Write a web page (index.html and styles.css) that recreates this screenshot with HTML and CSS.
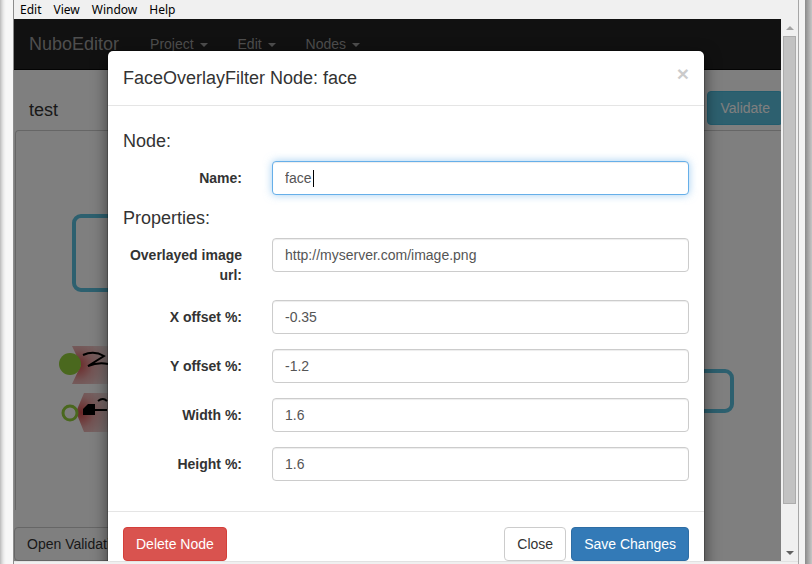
FILE: index.html
```html
<!DOCTYPE html>
<html>
<head>
<meta charset="utf-8">
<title>NuboEditor</title>
<link rel="stylesheet" href="styles.css">
</head>
<body>
<div class="window">
  <div class="frame-left"></div>
  <div class="main">
    <div class="menubar"><span>Edit</span><span>View</span><span>Window</span><span>Help</span></div>
    <div class="viewport">
      <div class="page">
        <nav class="navbar">
          <span class="brand">NuboEditor</span>
          <ul class="nav">
            <li>Project <span class="caret"></span></li>
            <li>Edit <span class="caret"></span></li>
            <li>Nodes <span class="caret"></span></li>
          </ul>
        </nav>
        <div class="header">
          <h3 class="page-title">test</h3>
          <button class="btn btn-info validate">Validate</button>
        </div>
        <div class="canvas">
          <svg class="diagram" width="766" height="378" viewBox="0 0 766 378">
            <defs>
              <radialGradient id="nodefill" cx="0.15" cy="0.5" r="0.9">
                <stop offset="0" stop-color="#d84e4e"/>
                <stop offset="0.45" stop-color="#e7a9a9"/>
                <stop offset="1" stop-color="#f5e6e6"/>
              </radialGradient>
            </defs>
            <rect x="58" y="85" width="110" height="74" rx="7" fill="none" stroke="#5bc0de" stroke-width="4"/>
            <rect x="625" y="240" width="91" height="40" rx="7" fill="none" stroke="#5bc0de" stroke-width="4"/>
            <polygon points="56,215 94,215 94,253 56,253 65,234" fill="url(#nodefill)"/>
            <path d="M67,224 Q78,219 88,225 L72,235 Q82,231 92,233" fill="none" stroke="#000" stroke-width="2"/>
            <circle cx="54" cy="233" r="11" fill="#94d03c"/>
            <polygon points="68,262 94,262 94,301 68,301 60,281" fill="url(#nodefill)"/>
            <polygon points="67,278 72,273 79,273 79,284 67,284" fill="#000"/>
            <path d="M79,279 L91,279 M82,270 Q87,266 91,270" fill="none" stroke="#000" stroke-width="2"/>
            <circle cx="54" cy="282" r="7" fill="none" stroke="#94d03c" stroke-width="3"/>
          </svg>
        </div>
        <div class="page-footer">
          <button class="btn btn-default">Open Validation</button>
        </div>
        <div class="backdrop"></div>
        <div class="modal">
          <div class="modal-header">
            <h4 class="modal-title">FaceOverlayFilter Node: face</h4>
            <button class="close">&times;</button>
          </div>
          <div class="modal-body">
            <h4 class="section">Node:</h4>
            <div class="form-group tight">
              <label class="control-label">Name:</label>
              <div class="control-col caret-wrap">
                <input class="form-control focused" type="text" value="face">
                <span class="text-caret"></span>
              </div>
            </div>
            <h4 class="section">Properties:</h4>
            <div class="form-group">
              <label class="control-label">Overlayed image url:</label>
              <div class="control-col"><input class="form-control" type="text" value="http://myserver.com/image.png"></div>
            </div>
            <div class="form-group">
              <label class="control-label">X offset %:</label>
              <div class="control-col"><input class="form-control" type="text" value="-0.35"></div>
            </div>
            <div class="form-group">
              <label class="control-label">Y offset %:</label>
              <div class="control-col"><input class="form-control" type="text" value="-1.2"></div>
            </div>
            <div class="form-group">
              <label class="control-label">Width %:</label>
              <div class="control-col"><input class="form-control" type="text" value="1.6"></div>
            </div>
            <div class="form-group">
              <label class="control-label">Height %:</label>
              <div class="control-col"><input class="form-control" type="text" value="1.6"></div>
            </div>
          </div>
          <div class="modal-footer">
            <button class="btn btn-danger">Delete Node</button>
            <div class="footer-right">
              <button class="btn btn-default">Close</button>
              <button class="btn btn-primary">Save Changes</button>
            </div>
          </div>
        </div>
      </div>
      <div class="scrollbar">
        <div class="sb-btn"><span class="arrow-up"></span></div>
        <div class="thumb"></div>
        <div class="track-rest"></div>
        <div class="sb-btn"><span class="arrow-down"></span></div>
      </div>
    </div>
    <div class="frame-bottom"></div>
  </div>
  <div class="frame-right"></div>
</div>
</body>
</html>
```

FILE: styles.css
```css
* { box-sizing: border-box; }
html, body { margin: 0; padding: 0; }
body {
  font-family: "Liberation Sans", Arial, sans-serif;
  font-size: 14px;
  line-height: 1.42857;
  color: #333;
  background: #f0f0f0;
  width: 812px;
  height: 564px;
  overflow: hidden;
}
.window { display: flex; height: 564px; }
.frame-left {
  width: 14px;
  background: linear-gradient(to right, #b9b9b9 0, #d9d9d9 2px, #eeeeee 4px, #f7f7f7 6px, #f7f7f7 13px, #8c8c8c 13px);
}
.main { width: 784px; display: flex; flex-direction: column; }
.menubar {
  height: 19px;
  background: #f0f0f0;
  display: flex;
  font-family: "Noto Sans", "Liberation Sans", sans-serif;
  font-size: 12px;
  line-height: 19px;
  color: #000;
}
.menubar span { padding: 0 6px; }
.viewport { display: flex; height: 542px; }
.page {
  position: relative;
  width: 767px;
  height: 542px;
  overflow: hidden;
  background: #fff;
}
.frame-bottom { height: 3px; background: #f0f0f0; border-top: 1px solid #e2e2e2; }
.frame-right {
  width: 14px;
  background: linear-gradient(to right, #a6a6a6 0, #a6a6a6 1px, #f2f2f2 1px, #f2f2f2 7px, #8a8a8a 7px, #c6c6c6 14px);
}

/* navbar */
.navbar {
  height: 51px;
  background: #222;
  border-bottom: 1px solid #080808;
  display: flex;
  align-items: center;
}
.brand { padding: 0 15px; font-size: 18px; line-height: 20px; color: #9d9d9d; }
.nav { display: flex; list-style: none; margin: 0; padding: 0 0 0 1px; }
.nav li { padding: 0 15px; color: #9d9d9d; line-height: 20px; }
.caret {
  display: inline-block;
  width: 0; height: 0;
  margin-left: 2px;
  vertical-align: middle;
  border-top: 4px solid;
  border-left: 4px solid transparent;
  border-right: 4px solid transparent;
}

/* page header */
.header {
  display: flex;
  align-items: center;
  justify-content: space-between;
  padding: 21px 0 0 15px;
}
.page-title { margin: 3px 0 0; font-size: 18px; font-weight: normal; line-height: 20px; }
.btn {
  display: inline-block;
  padding: 6px 12px;
  font-family: inherit;
  font-size: 14px;
  line-height: 20px;
  border: 1px solid transparent;
  border-radius: 4px;
  white-space: nowrap;
  cursor: pointer;
}
.btn-info { color: #fff; background: #5bc0de; border-color: #46b8da; }
.validate { margin-right: -2px; }
.btn-default { color: #333; background: #fff; border-color: #ccc; }
.btn-primary { color: #fff; background: #337ab7; border-color: #2e6da4; }
.btn-danger { color: #fff; background: #d9534f; border-color: #d43f3a; }

/* canvas */
.canvas {
  position: relative;
  margin: 5px -10px 0 1px;
  height: 380px;
  border: 1px solid #ccc;
  border-bottom: 0;
  border-radius: 4px 4px 0 0;
  overflow: hidden;
}
.diagram { display: block; }
.page-footer { padding-top: 17px; }

/* modal */
.backdrop { position: absolute; inset: 0; background: rgba(0, 0, 0, 0.5); }
.modal {
  position: absolute;
  left: 93px;
  top: 31px;
  width: 598px;
  background: #fff;
  border: 1px solid rgba(0, 0, 0, 0.2);
  border-radius: 6px;
  box-shadow: 0 5px 15px rgba(0, 0, 0, 0.5);
  background-clip: padding-box;
}
.modal-header {
  display: flex;
  justify-content: space-between;
  align-items: flex-start;
  padding: 15px;
  border-bottom: 1px solid #e5e5e5;
}
.modal-title { margin: 0; font-size: 18px; font-weight: normal; line-height: 24px; }
.close {
  margin-top: -3px;
  padding: 0;
  border: 0;
  background: none;
  font-family: inherit;
  font-size: 21px;
  font-weight: bold;
  line-height: 1;
  color: #000;
  opacity: 0.2;
}
.modal-body { padding: 15px; }
.section { margin: 10px 0; font-size: 18px; font-weight: normal; line-height: 20px; }
.form-group { display: flex; margin: 0 -15px 15px; }
.form-group.tight { margin-bottom: 13px; }
.control-label {
  width: 149px;
  flex: none;
  padding: 7px 15px 0;
  text-align: right;
  font-weight: bold;
  line-height: 20px;
}
.control-col { flex: 1; padding: 0 15px; }
.caret-wrap { position: relative; }
.form-control {
  display: block;
  width: 100%;
  height: 34px;
  padding: 6px 12px;
  font-family: inherit;
  font-size: 14px;
  line-height: 20px;
  color: #555;
  background: #fff;
  border: 1px solid #ccc;
  border-radius: 4px;
  box-shadow: inset 0 1px 1px rgba(0, 0, 0, 0.075);
  outline: none;
}
.form-control.focused {
  border-color: #66afe9;
  box-shadow: inset 0 1px 1px rgba(0, 0, 0, 0.075), 0 0 8px rgba(102, 175, 233, 0.6);
}
.text-caret {
  position: absolute;
  left: 56px;
  top: 9px;
  width: 1px;
  height: 17px;
  background: #000;
}
.modal-footer {
  display: flex;
  justify-content: space-between;
  padding: 15px;
  border-top: 1px solid #e5e5e5;
}
.footer-right { display: flex; gap: 5px; }

/* scrollbar */
.scrollbar {
  width: 17px;
  background: #f0f0f0;
  display: flex;
  flex-direction: column;
  align-items: center;
}
.sb-btn { width: 17px; height: 17px; display: flex; align-items: center; justify-content: center; flex: none; }
.arrow-up { width: 0; height: 0; border-left: 4px solid transparent; border-right: 4px solid transparent; border-bottom: 4px solid #a3a3a3; }
.arrow-down { width: 0; height: 0; border-left: 4px solid transparent; border-right: 4px solid transparent; border-top: 4px solid #606060; }
.thumb { width: 13px; height: 468px; flex: none; background: #c2c2c2; border: 1px solid #acacac; }
.track-rest { flex: 1; }
```
